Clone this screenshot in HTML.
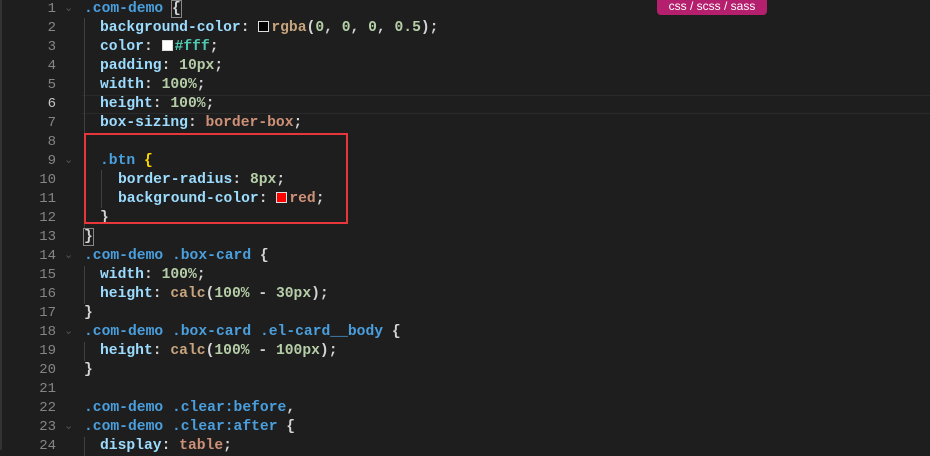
<!DOCTYPE html>
<html><head><style>
body{margin:0;width:930px;height:450px;background:#1e1e1e;overflow:hidden;position:relative;font-family:"Liberation Mono",monospace;font-size:14.67px;}
.l{position:absolute;left:0;height:19px;line-height:19px;width:930px;white-space:pre;}
.n{position:absolute;left:0;width:56px;text-align:right;color:#858585;font-size:14px}
.c{position:absolute;left:84px;color:#d4d4d4;font-weight:bold}
.i1{margin-left:16px}.i2{margin-left:34px}
.s{color:#4a9fde}.p{color:#9cdcfe}.v{color:#b5cea8}.o{color:#ce9178}.f{color:#c8a47e}.b{color:#ffd700}.w{color:#d4d4d4}
.sw{display:inline-block;width:9px;height:9px;border:1px solid #ddd;margin-right:2px;vertical-align:-1px}
.ch{position:absolute;left:64px;color:#555;font-size:11px}
.g{position:absolute;width:1px;background:#404040}
</style></head><body>
<div style="position:absolute;left:0;top:0;width:2px;height:450px;background:#333"></div>
<div style="position:absolute;left:82px;top:95px;width:848px;height:19px;border-top:1px solid #2a2a2a;border-bottom:1px solid #2a2a2a;box-sizing:border-box"></div>
<div class="g" style="left:84px;top:18px;height:210px"></div>
<div class="g" style="left:101px;top:170px;height:38px"></div>
<div class="g" style="left:84px;top:266px;height:38px"></div>
<div class="g" style="left:84px;top:342px;height:19px"></div>
<div class="g" style="left:84px;top:437px;height:19px"></div>
<div class="l" style="top:0px"><span class="n">1</span><span class="ch">⌄</span><span class="c"><span class="s">.com-demo</span> <span class="w" style="outline:1px solid #888">{</span></span></div>
<div class="l" style="top:19px"><span class="n">2</span><span class="c"><span class="i1"></span><span class="p">background-color</span>: <span class="sw" style="background:#000"></span><span class="f">rgba</span>(<span class="v">0</span>, <span class="v">0</span>, <span class="v">0</span>, <span class="v">0.5</span>);</span></div>
<div class="l" style="top:38px"><span class="n">3</span><span class="c"><span class="i1"></span><span class="p">color</span>: <span class="sw" style="background:#fff"></span><span style="color:#4ec9b0">#fff</span>;</span></div>
<div class="l" style="top:57px"><span class="n">4</span><span class="c"><span class="i1"></span><span class="p">padding</span>: <span class="v">10px</span>;</span></div>
<div class="l" style="top:76px"><span class="n">5</span><span class="c"><span class="i1"></span><span class="p">width</span>: <span class="v">100%</span>;</span></div>
<div class="l" style="top:95px"><span class="n" style="color:#c6c6c6">6</span><span class="c"><span class="i1"></span><span class="p">height</span>: <span class="v">100%</span>;</span></div>
<div class="l" style="top:114px"><span class="n">7</span><span class="c"><span class="i1"></span><span class="p">box-sizing</span>: <span class="o">border-box</span>;</span></div>
<div class="l" style="top:133px"><span class="n">8</span></div>
<div class="l" style="top:152px"><span class="n">9</span><span class="ch">⌄</span><span class="c"><span class="i1"></span><span class="s">.btn</span> <span class="b">{</span></span></div>
<div class="l" style="top:171px"><span class="n">10</span><span class="c"><span class="i2"></span><span class="p">border-radius</span>: <span class="v">8px</span>;</span></div>
<div class="l" style="top:190px"><span class="n">11</span><span class="c"><span class="i2"></span><span class="p">background-color</span>: <span class="sw" style="background:#f00"></span><span class="o">red</span>;</span></div>
<div class="l" style="top:209px"><span class="n">12</span><span class="c"><span class="i1"></span>}</span></div>
<div class="l" style="top:228px"><span class="n">13</span><span class="c"><span style="outline:1px solid #888">}</span></span></div>
<div class="l" style="top:247px"><span class="n">14</span><span class="ch">⌄</span><span class="c"><span class="s">.com-demo</span> <span class="s">.box-card</span> {</span></div>
<div class="l" style="top:266px"><span class="n">15</span><span class="c"><span class="i1"></span><span class="p">width</span>: <span class="v">100%</span>;</span></div>
<div class="l" style="top:285px"><span class="n">16</span><span class="c"><span class="i1"></span><span class="p">height</span>: <span class="f">calc</span>(<span class="v">100%</span> - <span class="v">30px</span>);</span></div>
<div class="l" style="top:304px"><span class="n">17</span><span class="c">}</span></div>
<div class="l" style="top:323px"><span class="n">18</span><span class="ch">⌄</span><span class="c"><span class="s">.com-demo</span> <span class="s">.box-card</span> <span class="s">.el-card__body</span> {</span></div>
<div class="l" style="top:342px"><span class="n">19</span><span class="c"><span class="i1"></span><span class="p">height</span>: <span class="f">calc</span>(<span class="v">100%</span> - <span class="v">100px</span>);</span></div>
<div class="l" style="top:361px"><span class="n">20</span><span class="c">}</span></div>
<div class="l" style="top:380px"><span class="n">21</span></div>
<div class="l" style="top:399px"><span class="n">22</span><span class="c"><span class="s">.com-demo</span> <span class="s">.clear:before</span>,</span></div>
<div class="l" style="top:418px"><span class="n">23</span><span class="ch">⌄</span><span class="c"><span class="s">.com-demo</span> <span class="s">.clear:after</span> {</span></div>
<div class="l" style="top:437px"><span class="n">24</span><span class="c"><span class="i1"></span><span class="p">display</span>: <span class="o">table</span>;</span></div>
<div style="position:absolute;left:84px;top:133px;width:264px;height:91px;border:2px solid #e8373a;box-sizing:border-box"></div>
<div style="position:absolute;left:657px;top:-4px;width:110px;height:19px;background:#b5206e;border-radius:4px;color:#fff;font-family:'Liberation Sans',sans-serif;font-size:12px;text-align:center;line-height:21px">css / scss / sass</div>
</body></html>
